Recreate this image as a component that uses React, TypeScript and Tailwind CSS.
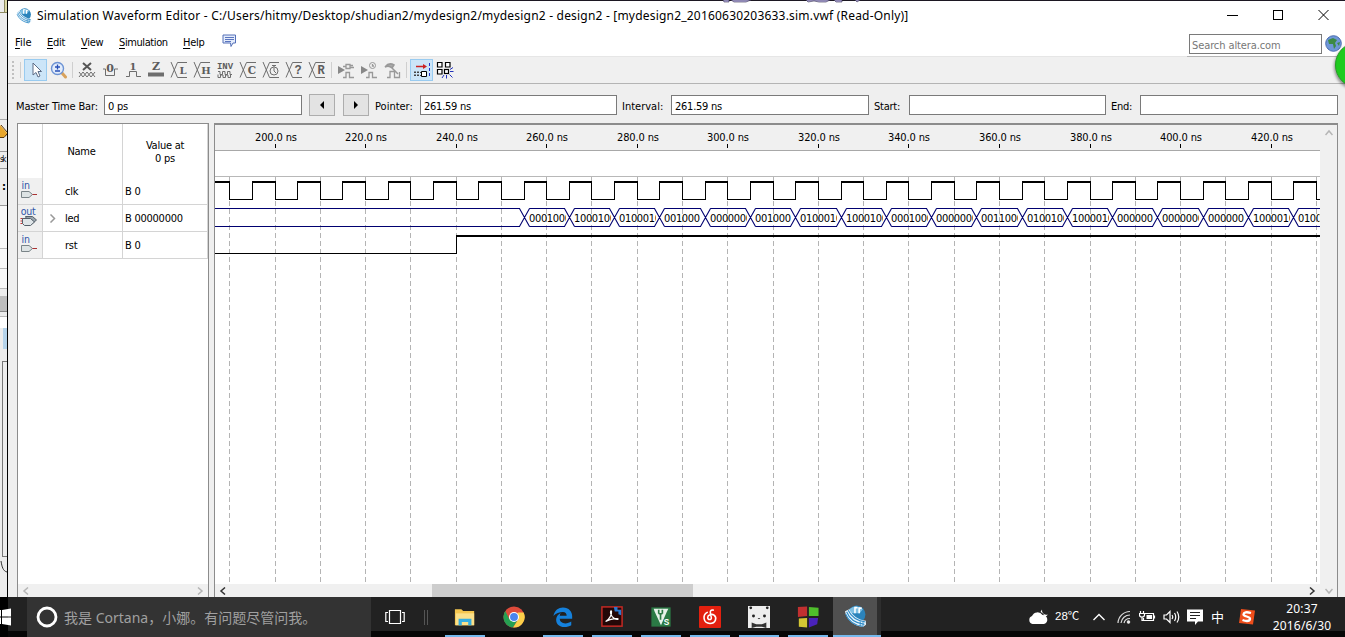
import React from "react";

const UI = "font-['DejaVu_Sans_Condensed','DejaVu_Sans',sans-serif] [font-stretch:condensed] text-[11px] leading-[13px] tracking-[-0.25px] whitespace-nowrap";

const GRID0 = 229.75 - 215;
const STEP = 45.28;
const gx = (i: number) => Math.floor(GRID0 + i * STEP) + 0.5;

const BUS = ["0001000", "1000100", "0100010", "001000", "0000000", "001000", "0100010", "1000100", "0001000", "0000000", "0011000", "0100100", "1000010", "000000", "0000000", "000000", "1000010", "0100"];

function Waveform() {
  const w = 1105;
  let clkHigh = "";
  let clkLine = "";
  for (let i = -1; i < 25; i++) {
    const fall = gx(i);
    const rise = gx(i + 0.5);
    const next = gx(i + 1);
    clkHigh += `M${rise - 0.5} 5H${next + 0.5}`;
    clkLine += `M${fall} 5V22.5H${rise}V5`;
  }
  const t = (k: number) => gx(k + 6.5);
  let bus = `M0 31.5H${t(0) - 5}L${t(0) + 5} 49.5M0 49.5H${t(0) - 5}L${t(0) + 5} 31.5`;
  for (let k = 0; k < 18; k++) {
    const a = t(k);
    const b = t(k + 1);
    bus += `M${a + 5} 31.5H${b - 5}L${b + 5} 49.5M${a + 5} 49.5H${b - 5}L${b + 5} 31.5`;
  }
  return (
    <svg width={w} height="407" viewBox={`0 0 ${w} 407`} className="block">
      <g stroke="#b4b4b4" strokeDasharray="5 3" shapeRendering="crispEdges">
        {Array.from({ length: 25 }, (_, i) => (
          <line key={i} x1={gx(i)} x2={gx(i)} y1="0" y2="407" />
        ))}
      </g>
      <path d={clkLine} stroke="#000" fill="none" shapeRendering="crispEdges" />
      <path d={clkHigh} stroke="#000" strokeWidth="2" fill="none" shapeRendering="crispEdges" />
      <path d={bus} stroke="#000070" strokeWidth="1.1" fill="none" />
      <path d="M0 76.5H241.5V59" stroke="#000" fill="none" shapeRendering="crispEdges" />
      <path d={`M241 59H${w}`} stroke="#000" strokeWidth="2" shapeRendering="crispEdges" />
      {BUS.map((s, k) => (
        <svg key={k} x={t(k) + 4} y="30" width={k === 17 ? 22 : 37.5} height="20">
          <text x="0.5" y="15" fontSize="11" textLength={s.length * 6} className="font-['DejaVu_Sans_Condensed','DejaVu_Sans',sans-serif]">{s}</text>
        </svg>
      ))}
    </svg>
  );
}

function Ruler() {
  return (
    <svg width="1105" height="26" viewBox="0 0 1105 26" className="block">
      {Array.from({ length: 12 }, (_, i) => {
        const x = gx(1 + i * 2);
        return (
          <g key={i}>
            <text x={x + 0.5} y="16" fontSize="11" textAnchor="middle" textLength="42" className="font-['DejaVu_Sans_Condensed','DejaVu_Sans',sans-serif]">{`${200 + i * 20}.0 ns`}</text>
            <path d={`M${x} 19V23`} stroke="#000" shapeRendering="crispEdges" />
          </g>
        );
      })}
    </svg>
  );
}

function QuartusIcon({ size }: { size: number }) {
  return (
    <svg width={size} height={size} viewBox="0 0 22 22">
      <circle cx="12" cy="9" r="8.500" fill="#2b83bb" />
      <path d="M5 4Q11 -1 18 4L15 8 7 8z" fill="#7fc0e4" />
      <path d="M10.500 8V2.500H13M14.500 8V3H17" stroke="#fff" strokeWidth="1.500" fill="none" />
      <path d="M1 6C2 14 9 20 18 21L21 19V15C13 14 8 10 5 4z" fill="#eaf5fc" />
      <path d="M1.500 8.500C4 15 10 19.500 18 20.500M2.500 6.500C5 13 11 17.500 19.500 18.500M4 5C7 11.500 12 15 20.500 16.300" stroke="#2e8ac6" strokeWidth="1.100" fill="none" />
      <path d="M15.500 15.500V20.500M18.200 15.800V20.500" stroke="#2e8ac6" strokeWidth=".8" />
    </svg>
  );
}

function Tool({ children, on }: { children?: React.ReactNode; on?: boolean }) {
  return (
    <div className={on ? "flex h-[22px] w-[23px] items-center justify-center border border-[#99cbf0] bg-[#cce5f8]" : "flex h-[22px] w-[23px] items-center justify-center"}>
      <svg width="18" height="18" viewBox="0 0 18 18" fill="none" stroke="#6e6e6e">{children}</svg>
    </div>
  );
}

const Sep = ({ cls }: { cls: string }) => <div className={`h-4 w-px bg-[#cfcfcf] ${cls}`} />;

const G = ({ x, y, s, children }: { x: number; y: number; s: number; children: string }) => (
  <text x={x} y={y} fontSize={s} textAnchor="middle" fill="#5c5c5c" stroke="none" className="font-['Liberation_Mono',monospace] font-bold">{children}</text>
);

const Slab = ({ x, y, s, children }: { x: number; y: number; s: number; children: string }) => (
  <text x={x} y={y} fontSize={s} textAnchor="middle" fill="#5c5c5c" stroke="none" className="font-['DejaVu_Serif',serif] font-bold">{children}</text>
);

const Cross = () => <path d="M1 1L7.500 16.500M1 16.500L7.500 1.500H17M7.500 16.500H17" />;

function Toolbar() {
  return (
    <div className="flex h-[27px] items-center border-b border-[#b4b4b4] bg-[#f0f0f0] pl-[4px]">
      <div className="h-[18px] w-0 border-l-2 border-dotted border-[#c0c0c0]" />
      <Sep cls="ml-[6px] mr-[3px]" />
      <Tool on><path d="M6 2V14L9 11.500 11 16 13 15 11 10.500H14.500z" fill="#fff" stroke="#5c6b85" /></Tool>
      <Tool>
        <path d="M12 12L15.500 16" stroke="#d8a25c" strokeWidth="3" strokeLinecap="round" />
        <circle cx="7.500" cy="7.500" r="6" fill="#e2ecfb" stroke="#6d93d4" strokeWidth="1.4" />
        <path d="M7.500 3.500V8.500M5 6H10M5 10H10" stroke="#2850b8" strokeWidth="1.300" />
      </Tool>
      <Sep cls="ml-[2px] mr-[2px]" />
      <Tool><path d="M5 2L13 9M13 2L5 9" strokeWidth="2" stroke="#555" /><path d="M1 11L5 16 9 11 13 16 17 11M1 16L5 11 9 16 13 11 17 16" /></Tool>
      <Tool><Slab x={9} y={10.5} s={11}>0</Slab><path d="M2 8H4.500V14.500H13.500V8H17" /></Tool>
      <Tool><Slab x={9} y={9} s={10}>1</Slab><path d="M2 15.500H5.500V10.500H12.500V15.500H17" /></Tool>
      <Tool><Slab x={9} y={9} s={11}>Z</Slab><path d="M1 13.500H17" strokeWidth="4" /></Tool>
      <Tool><Cross /><Slab x={13} y={13} s={10}>L</Slab></Tool>
      <Tool><Cross /><Slab x={13} y={13} s={10}>H</Slab></Tool>
      <Tool><G x={9} y={8} s={9}>INV</G><path d="M2 10.500H4V13.500H6.500V10.500H9V13.500H11.500V10.500H14V13.500H16M2 13.500V16.500H4.500V14H7V16.500H9.500V14H12V16.500H14.500V14" /></Tool>
      <Tool><Cross /><Slab x={13} y={13} s={10.5}>C</Slab></Tool>
      <Tool><Cross /><circle cx="12" cy="10" r="4" /><path d="M12 7V10L14 12M10 4.500H14M12 4.500V6" /></Tool>
      <Tool><Cross /><G x={13} y={13} s={12}>?</G></Tool>
      <Tool><Cross /><G x={13} y={13} s={12}>R</G></Tool>
      <Sep cls="ml-[3px] mr-[2px]" />
      <Tool><path d="M1 5L8 9 1 13z" fill="#888" stroke="none" /><path d="M9 3.500H13V7.500H9zM13 4.500H16M13 6.500H17M9 5.500H6M6 16.500H9V11.500H12.500V16.500H17" stroke="#999" strokeWidth="1.300" /></Tool>
      <Tool><path d="M1 5L8 9 1 13z" fill="#888" stroke="none" /><circle cx="12.500" cy="4.500" r="3" stroke="#999" /><path d="M12.500 3V5H14M6 16.500H9V11.500H12.500V16.500H17" stroke="#999" strokeWidth="1.300" /></Tool>
      <Tool><path d="M2 6Q6 1 11 4L9 7Q6 4 2 6zM8 6L15 13" stroke="#999" fill="#aaa" strokeWidth="1.500" /><path d="M4 16.500H7V10.500H11.500V16.500H16.500V11" stroke="#999" strokeWidth="1.300" /></Tool>
      <Sep cls="ml-[3px] mr-[3px]" />
      <Tool on>
        <path d="M3 5.500H11" stroke="#c22" strokeWidth="1.500" /><path d="M10 3L14 5.500 10 8z" fill="#c22" stroke="none" />
        <path d="M1 11.500H8M1 14.500H8M2 10v6M5 10v6" stroke="#444" strokeDasharray="2 1" /><path d="M8.500 10.500H13.500V15.500H8.500z" fill="#fff" stroke="#000" /><path d="M16.500 2V17" stroke="#2233cc" strokeDasharray="3 2" />
      </Tool>
      <Tool>
        <path d="M1.500 1.500H6V6H1.500zM9.500 1.500H14V6H9.500zM1.500 8.500H6V13H1.500z" stroke="#000" fill="#fff" strokeWidth="1.200" />
        <rect x="8.500" y="8.500" width="4" height="4" fill="#fff" stroke="#000" strokeWidth="1.200" />
        <path d="M14 10.500H17.500M14 8.500L17 6.500M13.500 13.500L16.500 16.500M10.500 14V17.500M8 14L6 17" stroke="#2233bb" />
      </Tool>
    </div>
  );
}

const Field = ({ cls, children }: { cls: string; children?: string }) => (
  <div className={`flex h-[20px] items-center border border-[#7a7a7a] bg-white pl-[3px] pt-[3px] ${cls}`}>{children}</div>
);

const Arrow = ({ d, cls }: { d: string; cls: string }) => (
  <div className={`flex h-[22px] w-[26px] items-center justify-center border border-[#adadad] bg-[#e3e3e3] ${cls}`}>
    <svg width="6" height="8" viewBox="0 0 6 8"><path d={d} fill="#000" /></svg>
  </div>
);

function TimeBar() {
  return (
    <div className={`${UI} flex h-[42px] items-center pl-[8px]`}>
      <div className="w-[88px] pt-[2px] tracking-[-0.15px]">Master Time Bar:</div>
      <Field cls="w-[198px]">0 ps</Field>
      <Arrow cls="ml-[7px]" d="M5 0V8L1 4z" />
      <Arrow cls="ml-[8px]" d="M1 0V8L5 4z" />
      <div className="ml-[6px] w-[45px] pt-[2px] tracking-[0px]">Pointer:</div>
      <Field cls="w-[197px]">261.59 ns</Field>
      <div className="ml-[5px] w-[49px] pt-[2px] tracking-[0px]">Interval:</div>
      <Field cls="w-[198px]">261.59 ns</Field>
      <div className="ml-[5px] w-[35px] pt-[2px]">Start:</div>
      <Field cls="w-[197px]" />
      <div className="ml-[5px] w-[29px] pt-[2px]">End:</div>
      <Field cls="w-[198px]" />
    </div>
  );
}

const Pin = ({ out }: { out?: boolean }) => (
  <svg width="20" height="22" viewBox="0 0 20 22" fill="none">
    <text x={out ? 8 : 1.5} y={out ? 8 : 9} fontSize="10.500" textAnchor={out ? "middle" : "start"} fill="#2f55a8" className="font-['DejaVu_Sans_Condensed','DejaVu_Sans',sans-serif]">{out ? "out" : "in"}</text>
    {out ? (
      <>
        <path d="M.5 11.500H4M.5 14H4M.5 16.500H4" stroke="#c33" />
        <path d="M5.500 9.500H12.500L16.500 13 13 16H8z" fill="#9aa5ae" stroke="#55606a" />
        <path d="M2.500 11.500H10.500L14.500 15 10.500 18.500H4.500L2.500 16.500z" fill="#dfe5e8" stroke="#55606a" />
      </>
    ) : (
      <>
        <path d="M1.500 11.500H9L12.500 14.500 9 17.500H1.500z" fill="#dde3e4" stroke="#7a8488" />
        <path d="M12.500 14.500H17" stroke="#a33" />
      </>
    )}
  </svg>
);

function SignalRow({ name, value, out }: { name: string; value: string; out?: boolean }) {
  return (
    <div className="flex h-[27px] border-b border-[#d4d4d4]">
      <div className="flex w-[25px] items-center justify-center border-r border-[#d4d4d4] bg-[#f0f0f0]"><Pin out={out} /></div>
      <div className="flex w-[80px] items-center border-r border-[#d4d4d4] pt-px">
        <div className="w-[22px] pl-[6px]">
          {out && <svg width="7" height="9" viewBox="0 0 7 9"><path d="M1.500 .5L5.500 4.500 1.500 8.500" fill="none" stroke="#999" strokeWidth="1.500" /></svg>}
        </div>
        {name}
      </div>
      <div className="flex flex-1 items-center border-r border-[#d4d4d4] pl-[2px] pt-px">{value}</div>
    </div>
  );
}

const Chev = ({ d, c }: { d: string; c: string }) => (
  <svg width="8" height="8" viewBox="0 0 8 8"><path d={d} fill="none" stroke={c} strokeWidth="1.500" /></svg>
);
const LEFT = "M6 .5L2 4 6 7.500";
const RIGHT = "M2 .5L6 4 2 7.500";

function SignalPanel() {
  return (
    <div className={`${UI} flex w-[192px] flex-col border-x border-t border-[#8c8c8c] bg-white`}>
      <div className="flex h-[54px]">
        <div className="w-[25px] border-r border-[#d4d4d4]" />
        <div className="flex w-[80px] items-center justify-center border-r border-[#d4d4d4] pr-[2px]">Name</div>
        <div className="flex flex-1 items-center justify-center border-r border-[#d4d4d4] pt-[2px] text-center">Value at<br />0 ps</div>
      </div>
      <SignalRow name="clk" value="B 0" />
      <SignalRow name="led" value="B 00000000" out />
      <SignalRow name="rst" value="B 0" />
      <div className="flex-1" />
      <div className="flex h-[13px] items-center justify-between bg-[#f0f0f0] px-[4px]">
        <Chev d={LEFT} c="#b5b5b5" /><Chev d={RIGHT} c="#b5b5b5" />
      </div>
    </div>
  );
}

function WavePanel() {
  return (
    <div className="ml-[5px] flex w-[1124px] border-x border-t-2 border-[#8c8c8c] bg-white">
      <div className="flex w-[1105px] flex-col overflow-hidden">
        <div className="h-[26px] border-b border-[#a8a8a8] bg-[#f0f0f0]"><Ruler /></div>
        <div className="h-[26px] border-b border-[#b8b8b8]" />
        <Waveform />
        <div className="flex h-[13px] items-center justify-between bg-[#f0f0f0] px-[4px]">
          <Chev d={LEFT} c="#333" />
          <div className="ml-[205px] h-full w-[261px] bg-[#cdcdcd]" />
          <div className="flex-1" />
          <Chev d={RIGHT} c="#333" />
        </div>
      </div>
      <div className="flex flex-1 flex-col items-center justify-between bg-[#f0f0f0] pt-[4px] pb-[2px]">
        <Chev d="M.5 6L4 2 7.500 6" c="#b5b5b5" /><Chev d="M.5 2L4 6 7.500 2" c="#b5b5b5" />
      </div>
    </div>
  );
}

const Menu = ({ k, rest, cls }: { k: string; rest: string; cls: string }) => (
  <div className={cls}><span className="underline underline-offset-2">{k}</span>{rest}</div>
);

function Backdrop() {
  return (
    <div className="flex w-[8px] flex-col overflow-hidden border-r border-black bg-[#ececec] font-['DejaVu_Sans_Condensed'] text-[11px] leading-[16px]">
      <div className="h-[13px] border-b border-[#8d8a60]"><div className="ml-[4px] h-full border-l border-[#8d8a60] bg-[#dcd9a8]" /></div>
      <div className="h-[107px] border-b border-[#aaa]" />
      <svg width="7" height="22" viewBox="0 0 7 22"><path d="M0 5L7 13V15L4 17H0z" fill="#e8a62c" /><path d="M1 5L7 12M0 17.500H4L7 14" stroke="#5a3a10" fill="none" /></svg>
      <div className="h-[10px] border-b border-[#999]" />
      <div className="h-[17px] border-b border-[#999] text-[8px] tracking-[-1.5px]">sk</div>
      <div className="h-[10px]" />
      <div className="h-[27px] border-b border-[#999] pl-[2px] font-bold">:</div>
      <div className="h-[43px] border-b border-[#bbb] bg-[#f8f8f8]" />
      <div className="h-[20px] border-b border-[#bbb] bg-[#f8f8f8]" />
      <div className="h-[20px] border-b border-[#bbb] bg-[#f8f8f8]" />
      <div className="mt-[7px] h-[16px] border-b border-[#888] bg-[#bdbdbd]" />
      <div className="mt-[4px] h-[12px] border-t border-[#bbb] bg-white" />
      <div className="ml-[3px] h-[21px] bg-[#b5d3ea]" />
      <div className="mt-[12px] ml-[2px] h-[196px] border-y border-l border-[#777]" />
      <svg width="7" height="38" viewBox="0 0 7 38"><path d="M1 4C2 10 3 14 7 15" stroke="#333" fill="none" /></svg>
    </div>
  );
}

const App1 = ({ cls, run, children }: { cls: string; run?: boolean; children: React.ReactNode }) => (
  <div className={`flex h-full flex-col items-center ${cls}`}>
    <div className="flex h-[38px] items-center pt-[1px]">
      <svg width="22" height="22" viewBox="0 0 24 24">{children}</svg>
    </div>
    {run && <div className="h-[2px] w-full bg-[#76b9ed]" />}
  </div>
);

function Taskbar() {
  return (
    <div className="flex h-[40px] bg-[linear-gradient(to_bottom,#222_34px,#060606_34px)] text-white">
      <div className="flex w-[27px] items-center bg-[linear-gradient(to_right,#000_8px,transparent_8px)]">
        <svg width="12" height="18" viewBox="0 0 12 18" fill="#fff"><path d="M0 2L1 2V8.500H0zM0 9.500H1V16H0zM2 2L11 .5V8.500H2zM2 9.500H11V17.500L2 16z" /></svg>
      </div>
      <div className="flex w-[344px] items-center bg-[#333] pl-[9px]">
        <svg width="22" height="22" viewBox="0 0 22 22"><circle cx="11" cy="11" r="9" fill="none" stroke="#fff" strokeWidth="2.800" /></svg>
        <div className="ml-[6px] pt-[2px] font-['Noto_Sans','Noto_Sans_CJK_SC',sans-serif] text-[14px] leading-[20px] whitespace-nowrap text-[#a0a0a0]">我是 Cortana，小娜。有问题尽管问我。</div>
      </div>
      <div className="flex w-[74px] items-center pl-[14px]">
        <svg width="20" height="16" viewBox="0 0 20 16" fill="none" stroke="#fff" strokeWidth="1.200"><path d="M4.500 1.500H15.500V14.500H4.500zM3 3.500H.8V12.500H3M17 3.500H19.200V12.500H17" /></svg>
        <div className="ml-[19px] h-[15px] w-[4px] border-x border-[#555]" />
      </div>
      <App1 cls="w-[40px]" run>
        <path d="M1 3.500H8L10 5.500H22V21H1z" fill="#f5c64f" /><path d="M2 8H22V21H2z" fill="#fbe08a" /><path d="M5 21V14H19V21H15.500V17.500H8.500V21z" fill="#35aee2" />
      </App1>
      <App1 cls="ml-[9px] w-[40px]">
        <circle cx="12" cy="12" r="11.500" fill="#de4b3b" />
        <path d="M2.500 5.500A11.500 11.500 0 0 0 11 23.500L16.500 14.500 12 12 7 14.500z" fill="#26a052" />
        <path d="M22.500 7A11.500 11.500 0 0 1 11 23.500L16.800 14.500 16 7z" fill="#fdd04a" />
        <circle cx="12" cy="12" r="5.500" fill="#fff" /><circle cx="12" cy="12" r="4.300" fill="#4a84ee" />
      </App1>
      <App1 cls="ml-[9px] w-[40px]" run>
        <path d="M1.500 11C3 4.500 7 1.500 12 1.500 18.500 1.500 22 6 22 11V14H8.500C8.500 17 11 19 14.500 19 17 19 19 18.200 21 17V21C19 22.300 16.500 23 13.500 23 8 23 4.500 19.500 4.500 15 4.500 11.500 6.500 9 9.500 7.500 8.800 8.500 8.500 9.500 8.500 10.500H16C16 8 14.500 6.500 12 6.500 8 6.500 4 8 1.500 11z" fill="#1581dc" />
      </App1>
      <App1 cls="ml-[9px] w-[40px]" run>
        <rect x="1" y="1" width="22" height="21" fill="#240707" stroke="#c52a24" strokeWidth="1.600" />
        <path d="M5 17C9 15 12 9 11.500 6 11 4 9.500 6 11 9.500 12.500 13 16 15 18.500 14.500 20 13.500 12 12.500 5 17z" fill="none" stroke="#fff" strokeWidth="1.300" />
        <path d="M14 1H18V4H22V10L19 9V6H15z" fill="#2b79cf" />
      </App1>
      <App1 cls="ml-[9px] w-[40px]" run>
        <rect x="1.500" y="1.500" width="21" height="21" fill="#2b7a45" />
        <path d="M4 3H20L18 7 12 21 5 6z" fill="#e8f2ea" /><path d="M9.500 4V8.500M13.500 4V8.500M9.500 8.500H13.500M11.500 8V15" stroke="#2b7a45" strokeWidth="1.800" />
        <text x="15" y="20.500" fontSize="9" fill="#fff" className="font-['Liberation_Sans'] font-bold">S</text>
      </App1>
      <App1 cls="ml-[9px] w-[40px]" run>
        <rect x="-.5" y="-.5" width="25" height="25" rx="3.500" fill="#e3200f" />
        <path d="M15.500 4.500C12.500 4 12 6 12.500 8L13.500 13C13.800 15.500 9.500 15.500 9.500 12.500 9.500 9.500 14 8.200 16.500 10 20 13 18 19 12 19 4.500 19 3.500 10 9 7" fill="none" stroke="#fff" strokeWidth="1.700" strokeLinecap="round" />
      </App1>
      <App1 cls="ml-[9px] w-[40px]" run>
        <rect width="24" height="24" fill="#eee" /><circle cx="3" cy="2" r="1.500" fill="#222" /><circle cx="21" cy="2" r="1.500" fill="#222" />
        <circle cx="6" cy="11" r="1.600" fill="#222" /><circle cx="18" cy="11" r="1.600" fill="#222" /><path d="M10.500 13H13.500L12 14.500z" fill="#222" /><path d="M4 18L9 20H15L20 18V24L15 22.500H9L4 24z" fill="#333" />
      </App1>
      <App1 cls="ml-[9px] w-[40px]" run>
        <path d="M1 1L11 .5V11L1 12z" fill="#c03030" /><path d="M13 1L23.500 2V11H13z" fill="#4fbe2c" /><path d="M2 13.500L11 13V23.500L2 22.500z" fill="#d3c634" /><path d="M13 13H23L22 20 13 23.500z" fill="#4a22ba" />
      </App1>
      <div className="ml-[5px] flex h-full w-[48px] flex-col bg-[#2e2e2e]">
        <div className="flex h-[38px] w-[44px] items-center justify-center bg-[#505050]"><QuartusIcon size={23} /></div>
        <div className="h-[2px] bg-[#76b9ed]" />
      </div>
      <div className="ml-[147px] flex items-center">
        <svg width="21" height="18" viewBox="0 0 21 18" fill="#fff"><path d="M4.500 16A4.200 4.200 0 0 1 4 8 6 6 0 0 1 14.500 7 4.600 4.600 0 0 1 16 16z" /><path d="M14 1.500A4.500 4.500 0 0 0 20 6.500 4.500 4.500 0 0 1 16.500 8.500 6 6 0 0 0 12.500 4z" /></svg>
        <div className="ml-[6px] w-[25px] font-['Liberation_Sans','Noto_Sans_CJK_SC',sans-serif] text-[11.5px]">28℃</div>
        <svg className="ml-[12px]" width="14" height="10" viewBox="0 0 14 10"><path d="M1.500 8L7 2.500 12.500 8" stroke="#fff" strokeWidth="1.400" fill="none" /></svg>
        <svg className="ml-[11px]" width="14" height="14" viewBox="0 0 14 14" fill="none" stroke="#ddd" strokeWidth="1.200"><path d="M1 13A12 12 0 0 1 13 1.500M4 13A9 9 0 0 1 13 5M7 13A6 6 0 0 1 13 8.500" /><circle cx="11.500" cy="12" r="1.200" fill="#fff" /></svg>
        <svg className="ml-[8px]" width="17" height="14" viewBox="0 0 17 14" fill="none" stroke="#fff" strokeWidth="1.200"><path d="M6 3.500H14.500V10.500H4.500V8M15.500 5.500V8.500M1.500 1V3.500M4.500 1V3.500M.5 3.500H5.500V5Q5.500 7 3 7 .5 7 .5 5zM3 7V10.500H5" /><path d="M7.500 7H13" strokeWidth="4" /></svg>
        <svg className="ml-[7px]" width="18" height="14" viewBox="0 0 18 14" fill="none" stroke="#fff" strokeWidth="1.200"><path d="M1 5H3.500L7 1.500V12.500L3.500 9H1zM9 5Q10.500 7 9 9M11.500 3Q14 7 11.500 11M14 1.500Q17.500 7 14 12.500" /></svg>
        <svg className="ml-[5px]" width="18" height="18" viewBox="0 0 18 18"><path d="M1 1.500H17V13.500H12L9 17V13.500H1z" fill="#fff" /><path d="M4 4.500H14M4 7.500H14M4 10.500H10" stroke="#222" /></svg>
        <div className="ml-[7px] w-[14px] font-['Noto_Sans_CJK_SC',sans-serif] text-[13px] leading-[16px] pb-px">中</div>
        <svg className="ml-[13px]" width="18" height="18" viewBox="0 0 18 18"><path d="M3 1L17 2.500 15 16.500 1 15z" fill="#ef4e1b" /><path d="M13 5Q6 3 5.500 6.500C5.500 9 12.500 8 12 11 11.500 14 7 13 4.500 12" stroke="#fff" strokeWidth="2.300" fill="none" /></svg>
      </div>
      <div className="ml-[15px] flex w-[62px] flex-col pt-[3px] text-center font-['Noto_Sans',sans-serif] text-[12px] leading-[17px] tracking-[0.15px]"><span>20:37</span><span>2016/6/30</span></div>
    </div>
  );
}

export default function App() {
  return (
    <div className="relative flex h-[637px] w-[1345px] flex-col overflow-hidden bg-[#efefef] text-black">
      <div className="flex h-[597px]">
        <Backdrop />
        <div className="flex w-[1337px] flex-col">
          <div className="h-px bg-[#1c1722] pl-[714px]">
            <svg width="190" height="3" viewBox="0 0 190 3" className="relative block"><path d="M1 0H7V2H2zM9 0H29L24 2H12zM84 0H108L104 2H97L92 1 86 2zM112 0H120V2H114zM133 0H138L135 2z" fill="#b5aee0" stroke="#35304f" strokeWidth=".6" /></svg>
          </div>
          <div className="flex h-[29px] items-center bg-white pl-[8px]">
            <QuartusIcon size={16} />
            <div className="ml-[5px] w-[1179px] font-['Noto_Sans','Open_Sans',sans-serif] text-[12px] leading-[18px] tracking-[0.2px] whitespace-nowrap">Simulation Waveform Editor - C:/Users/hitmy/Desktop/shudian2/mydesign2/mydesign2 - design2 - [mydesign2_20160630203633.sim.vwf (Read-Only)]</div>
            <svg width="104" height="12" viewBox="0 0 104 12" fill="none" stroke="#000" className="ml-[10px] mb-px"><path d="M1 6.500H12M47.500 1.500H56.500V10.500H47.500z" shapeRendering="crispEdges" /><path d="M92.500 1L102.500 11M102.500 1L92.500 11" /></svg>
          </div>
          <div className={`${UI} flex h-[26px] items-center bg-white`}>
            <Menu cls="ml-[7px] w-[32px] pb-px tracking-[0px]" k="F" rest="ile" />
            <Menu cls="w-[34px] pb-px" k="E" rest="dit" />
            <Menu cls="w-[38px] pb-px" k="V" rest="iew" />
            <Menu cls="w-[64px] pb-px tracking-[-0.4px]" k="S" rest="imulation" />
            <Menu cls="w-[39px] pb-px" k="H" rest="elp" />
            <svg width="15" height="14" viewBox="0 0 15 14" className="mb-[4px]"><path d="M1 1H13.500V9H11L9 12.500 8.500 9H1z" fill="#e4ecfb" stroke="#5470b8" /><path d="M3 3.500H12M3 5.500H12M3 7.500H9" stroke="#4a68b8" strokeWidth=".9" /></svg>
            <div className="ml-[952px] mt-[2px] flex h-[20px] w-[133px] items-center border border-[#7a7a7a] bg-white pl-[2px] pt-[2px] tracking-[-0.1px] text-[#777]">Search altera.com</div>
            <svg width="17" height="17" viewBox="0 0 17 17" className="ml-[3px] mt-px"><circle cx="8.500" cy="8.500" r="7.800" fill="#6f97d8" stroke="#4a6cae" /><path d="M3 5L8 3 12 5 10 8 11 11 9 14 8 9 4 9zM12 8L15 7 14 11z" fill="#3d8a44" /></svg>
          </div>
          <div className="flex h-px bg-[#e6e6e6] pl-[1179px]"><div className="h-px w-full bg-[#b4b4b4]" /></div>
          <Toolbar />
          <TimeBar />
          <div className="-mt-[3px] flex flex-1 pl-[9px]">
            <SignalPanel />
            <WavePanel />
          </div>
        </div>
      </div>
      <Taskbar />
      <div className="absolute top-[42px] left-[1335px] h-[46px] w-[46px] rounded-full border border-[#22a022] bg-[#1fcb1f] shadow-[-1px_2px_3px_rgba(0,0,0,0.4)]" />
    </div>
  );
}
